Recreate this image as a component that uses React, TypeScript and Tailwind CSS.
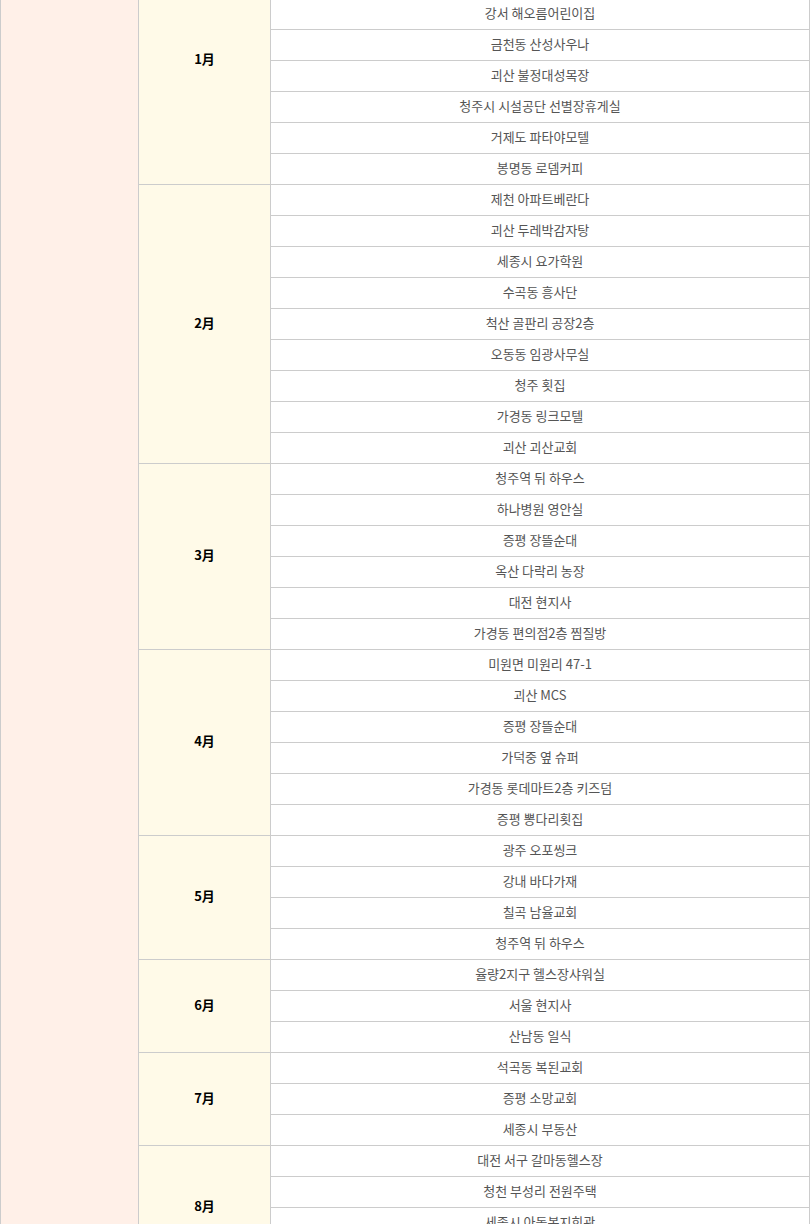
const groups: { month: string; places: string[] }[] = [
  {
    month: "1月",
    places: [
      "",
      "",
      "강서 해오름어린이집",
      "금천동 산성사우나",
      "괴산 불정대성목장",
      "청주시 시설공단 선별장휴게실",
      "거제도 파타야모텔",
      "봉명동 로뎀커피",
    ],
  },
  {
    month: "2月",
    places: [
      "제천 아파트베란다",
      "괴산 두레박감자탕",
      "세종시 요가학원",
      "수곡동 흥사단",
      "척산 골판리 공장2층",
      "오동동 임광사무실",
      "청주 횟집",
      "가경동 링크모텔",
      "괴산 괴산교회",
    ],
  },
  {
    month: "3月",
    places: [
      "청주역 뒤 하우스",
      "하나병원 영안실",
      "증평 장뜰순대",
      "옥산 다락리 농장",
      "대전 현지사",
      "가경동 편의점2층 찜질방",
    ],
  },
  {
    month: "4月",
    places: [
      "미원면 미원리 47-1",
      "괴산 MCS",
      "증평 장뜰순대",
      "가덕중 옆 슈퍼",
      "가경동 롯데마트2층 키즈덤",
      "증평 뽕다리횟집",
    ],
  },
  {
    month: "5月",
    places: ["광주 오포씽크", "강내 바다가재", "칠곡 남율교회", "청주역 뒤 하우스"],
  },
  {
    month: "6月",
    places: ["율량2지구 헬스장샤워실", "서울 현지사", "산남동 일식"],
  },
  {
    month: "7月",
    places: ["석곡동 복된교회", "증평 소망교회", "세종시 부동산"],
  },
  {
    month: "8月",
    places: ["대전 서구 갈마동헬스장", "청천 부성리 전원주택", "세종시 아동복지회관", ""],
  },
];

const MonthGroup = ({ month, places }: { month: string; places: string[] }) => (
  <div className="flex border-b border-[#cccccc]">
    <div className="flex w-[132px] shrink-0 items-center justify-center border-r border-[#cccccc] bg-[#fffae8] pb-[3px] text-[13px] font-bold text-black">
      {month}
    </div>
    <div className="flex flex-1 flex-col divide-y divide-[#cccccc]">
      {places.map((place, i) => (
        <div
          key={i}
          className="box-content flex h-[28px] items-center justify-center pb-[2px] text-[13px] text-[#555555]"
        >
          {place}
        </div>
      ))}
    </div>
  </div>
);

export default function App() {
  return (
    <div
      className="w-[810px] bg-white"
      style={{ fontFamily: '"Noto Sans CJK KR", "Noto Sans", sans-serif' }}
    >
      <div className="-mt-[63px] flex border-x border-[#cccccc]">
        <div className="w-[138px] shrink-0 border-r border-[#cccccc] bg-[#fff0e8]" />
        <div className="flex flex-1 flex-col">
          {groups.map((g) => (
            <MonthGroup key={g.month} month={g.month} places={g.places} />
          ))}
        </div>
      </div>
    </div>
  );
}
